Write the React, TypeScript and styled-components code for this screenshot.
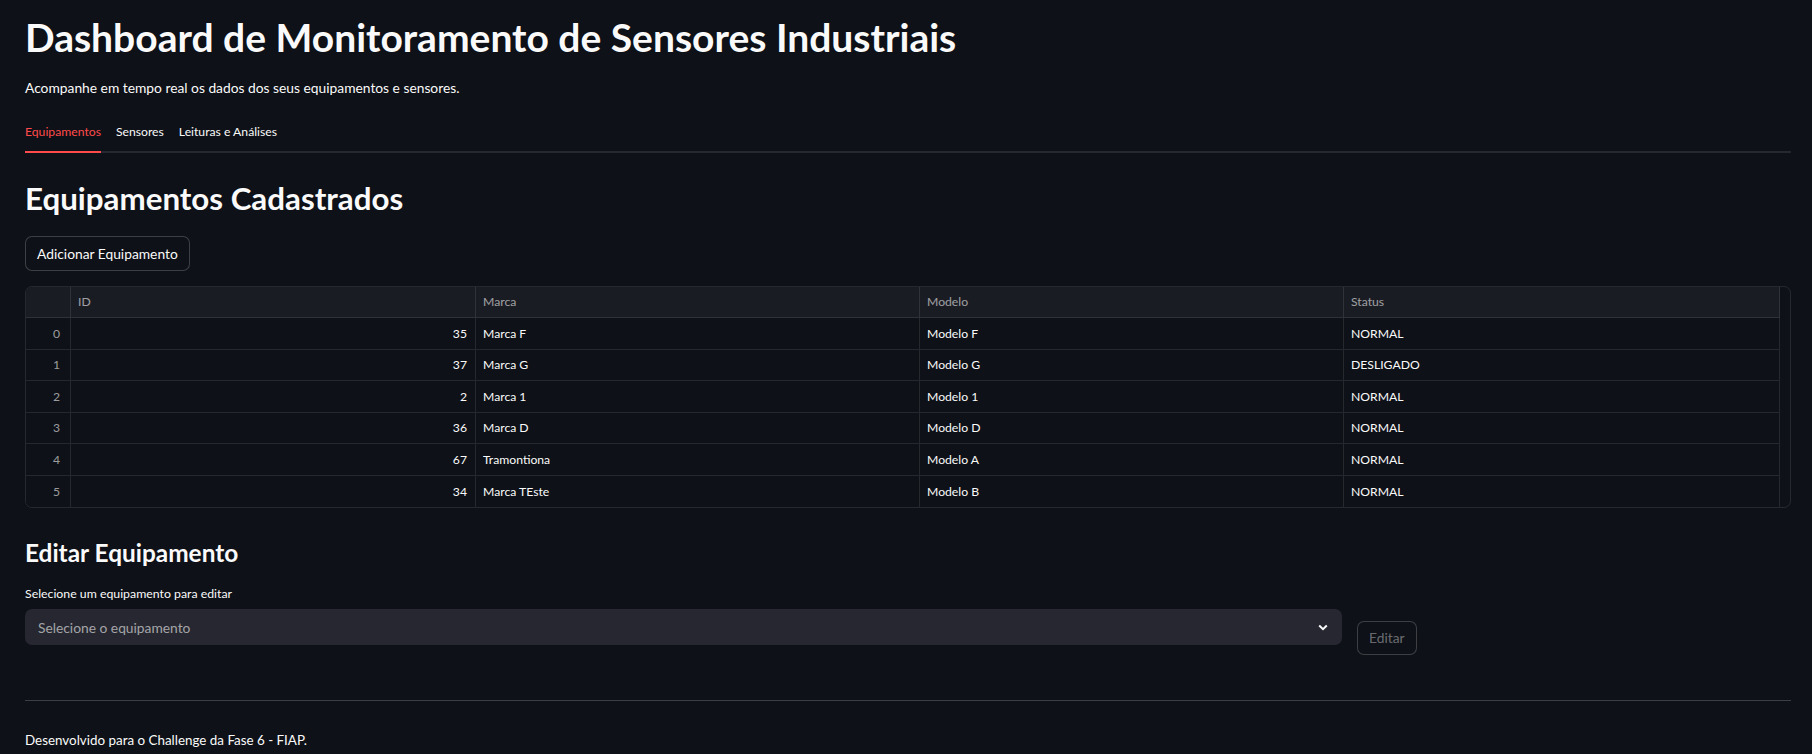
import React from "react";
import styled, { createGlobalStyle } from "styled-components";

const GlobalStyle = createGlobalStyle`
  html, body {
    margin: 0;
    padding: 0;
    background: #0e1117;
    color: #fafafa;
    font-family: "Lato", "Noto Sans", sans-serif;
  }
  * { box-sizing: border-box; }
`;

const Page = styled.div`
  padding: 14px 21px 0 25px;
  min-height: 754px;
  overflow: hidden;
`;

const Title = styled.h1`
  margin: 0;
  font-size: 39px;
  line-height: 46px;
  font-weight: 700;
  color: #fafafa;
`;

const Paragraph = styled.p<{ $top: number; $size?: number }>`
  margin: ${(p) => p.$top}px 0 0;
  font-size: ${(p) => p.$size ?? 13.8}px;
  line-height: 24px;
  color: #fafafa;
`;

const TabList = styled.div`
  margin-top: 24px;
  display: flex;
  gap: 15px;
  border-bottom: 2px solid #262730;
`;

const Tab = styled.div<{ $active?: boolean }>`
  font-size: 12.2px;
  line-height: 16px;
  padding-bottom: 11px;
  margin-bottom: -2px;
  border-bottom: 2px solid ${(p) => (p.$active ? "#ff4b4b" : "transparent")};
  color: ${(p) => (p.$active ? "#ff4b4b" : "#fafafa")};
`;

const H2 = styled.h2`
  margin: 26px 0 0;
  font-size: 31.3px;
  line-height: 38px;
  font-weight: 700;
`;

const H3 = styled.h3`
  margin: 30px 0 0;
  font-size: 24.4px;
  line-height: 30px;
  font-weight: 700;
`;

const Button = styled.button<{ $top?: number }>`
  margin-top: ${(p) => p.$top ?? 0}px;
  display: inline-flex;
  align-items: center;
  height: 34.5px;
  padding: 0 11px;
  background: #0e1117;
  border: 1px solid rgba(250, 250, 250, 0.2);
  border-radius: 7px;
  color: #fafafa;
  font-family: inherit;
  font-size: 13.8px;
  &:disabled {
    color: rgba(250, 250, 250, 0.4);
  }
`;

const TableWrap = styled.div`
  margin-top: 15px;
  border: 1px solid rgba(250, 250, 250, 0.1);
  border-radius: 7px;
  overflow: hidden;
`;

const Grid = styled.div`
  display: grid;
  grid-template-columns: 45px 405px 444px 424px 436px;
  width: 1754px;
`;

const Cell = styled.div<{ $head?: boolean; $right?: boolean; $index?: boolean; $last?: boolean }>`
  height: 31.5px;
  display: flex;
  align-items: center;
  justify-content: ${(p) => (p.$right ? "flex-end" : "flex-start")};
  padding: 0 ${(p) => (p.$index ? 10 : 8)}px 0 7px;
  font-size: 12.2px;
  white-space: nowrap;
  background: ${(p) => (p.$head ? "#1a1c24" : "#0e1117")};
  color: ${(p) => (p.$head || p.$index ? "rgba(250,250,250,0.6)" : "#fafafa")};
  border-right: 1px solid rgba(250, 250, 250, 0.1);
  border-bottom: ${(p) => (p.$last ? "none" : "1px solid rgba(250, 250, 250, 0.1)")};
`;

const EditRow = styled.div`
  display: grid;
  grid-template-columns: 1317px 1fr;
  gap: 15px;
  margin-top: 17px;
  align-items: start;
`;

const Field = styled.div`
  display: flex;
  flex-direction: column;
`;

const Label = styled.label`
  font-size: 12.3px;
  line-height: 18px;
  color: #fafafa;
`;

const Select = styled.div`
  margin-top: 6px;
  height: 36px;
  border-radius: 7px;
  background: #262730;
  display: flex;
  align-items: center;
  justify-content: space-between;
  padding: 0 14px 0 13px;
  font-size: 13.8px;
  color: rgba(250, 250, 250, 0.6);
`;

const ButtonCol = styled.div`
  padding-top: 35.5px;
`;

const Divider = styled.hr`
  margin: 45px 0 0;
  border: none;
  border-top: 1px solid rgba(250, 250, 250, 0.2);
`;

const rows = [
  [0, 35, "Marca F", "Modelo F", "NORMAL"],
  [1, 37, "Marca G", "Modelo G", "DESLIGADO"],
  [2, 2, "Marca 1", "Modelo 1", "NORMAL"],
  [3, 36, "Marca D", "Modelo D", "NORMAL"],
  [4, 67, "Tramontiona", "Modelo A", "NORMAL"],
  [5, 34, "Marca TEste", "Modelo B", "NORMAL"],
];

export default function App() {
  return (
    <>
      <GlobalStyle />
      <Page>
        <Title>Dashboard de Monitoramento de Sensores Industriais</Title>
        <Paragraph $top={16}>Acompanhe em tempo real os dados dos seus equipamentos e sensores.</Paragraph>
        <TabList>
          <Tab $active>Equipamentos</Tab>
          <Tab>Sensores</Tab>
          <Tab>Leituras e Análises</Tab>
        </TabList>
        <H2>Equipamentos Cadastrados</H2>
        <Button $top={19}>Adicionar Equipamento</Button>
        <TableWrap>
          <Grid>
            <Cell $head />
            <Cell $head>ID</Cell>
            <Cell $head>Marca</Cell>
            <Cell $head>Modelo</Cell>
            <Cell $head>Status</Cell>
            {rows.map((r, i) => {
              const last = i === rows.length - 1;
              return (
                <React.Fragment key={i}>
                  <Cell $index $right $last={last}>{r[0]}</Cell>
                  <Cell $right $last={last}>{r[1]}</Cell>
                  <Cell $last={last}>{r[2]}</Cell>
                  <Cell $last={last}>{r[3]}</Cell>
                  <Cell $last={last}>{r[4]}</Cell>
                </React.Fragment>
              );
            })}
          </Grid>
        </TableWrap>
        <H3>Editar Equipamento</H3>
        <EditRow>
          <Field>
            <Label>Selecione um equipamento para editar</Label>
            <Select>
              <span>Selecione o equipamento</span>
              <svg width="10" height="7" viewBox="0 0 10 7">
                <path d="M1.2 1.5 L5 5.2 L8.8 1.5" fill="none" stroke="#fafafa" strokeWidth="2" />
              </svg>
            </Select>
          </Field>
          <ButtonCol>
            <Button disabled>Editar</Button>
          </ButtonCol>
        </EditRow>
        <Divider />
        <Paragraph $top={27} $size={13.4}>Desenvolvido para o Challenge da Fase 6 - FIAP.</Paragraph>
      </Page>
    </>
  );
}
